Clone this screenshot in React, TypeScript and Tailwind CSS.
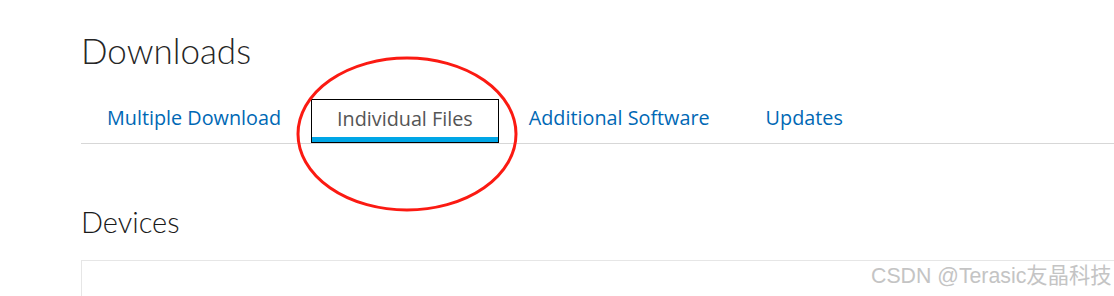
const tabs = [
  { label: 'Multiple Download', active: false },
  { label: 'Individual Files', active: true },
  { label: 'Additional Software', active: false },
  { label: 'Updates', active: false },
]

const App = () => {
  return (
    <div className="relative h-[296px] w-[1114px] overflow-hidden bg-white">
      <div className="pl-[81px] pt-[26px]">
        <h1 className="font-['Lato',sans-serif] text-[35px] font-light leading-[48px] text-[#262626]">
          Downloads
        </h1>

        <div className="mt-[25px] flex gap-[4px] border-b border-[#d7d7d7] font-['Open_Sans',sans-serif] text-[19.8px]">
          {tabs.map((tab) =>
            tab.active ? (
              <div
                key={tab.label}
                className="flex h-[44px] items-center border-[1.5px] border-black px-[25px] pb-[5px] text-[#555] shadow-[inset_0_-5px_0_#00a6e6]"
              >
                {tab.label}
              </div>
            ) : (
              <div
                key={tab.label}
                className="flex h-[43px] items-center px-[26px] pb-[6px] text-[#0068b5]"
              >
                {tab.label}
              </div>
            ),
          )}
        </div>

        <h2 className="mt-[60px] font-['Lato',sans-serif] text-[29px] font-light leading-[36px] text-[#1a1a1a]">
          Devices
        </h2>

        <div className="mt-[20px] h-[60px] border-l border-t border-[#e6e6e6]" />
      </div>

      <svg
        className="pointer-events-none absolute left-0 top-0"
        width="1114"
        height="296"
      >
        <ellipse
          cx="407"
          cy="134"
          rx="109"
          ry="76"
          fill="none"
          stroke="#fb1a12"
          strokeWidth="3"
        />
      </svg>

      <div className="pointer-events-none absolute left-[871px] top-[261px] font-['Liberation_Sans','Noto_Sans_CJK_SC',sans-serif] text-[21.3px] font-normal text-[#c4c4c4]">
        CSDN @Terasic友晶科技
      </div>
    </div>
  )
}

export default App
